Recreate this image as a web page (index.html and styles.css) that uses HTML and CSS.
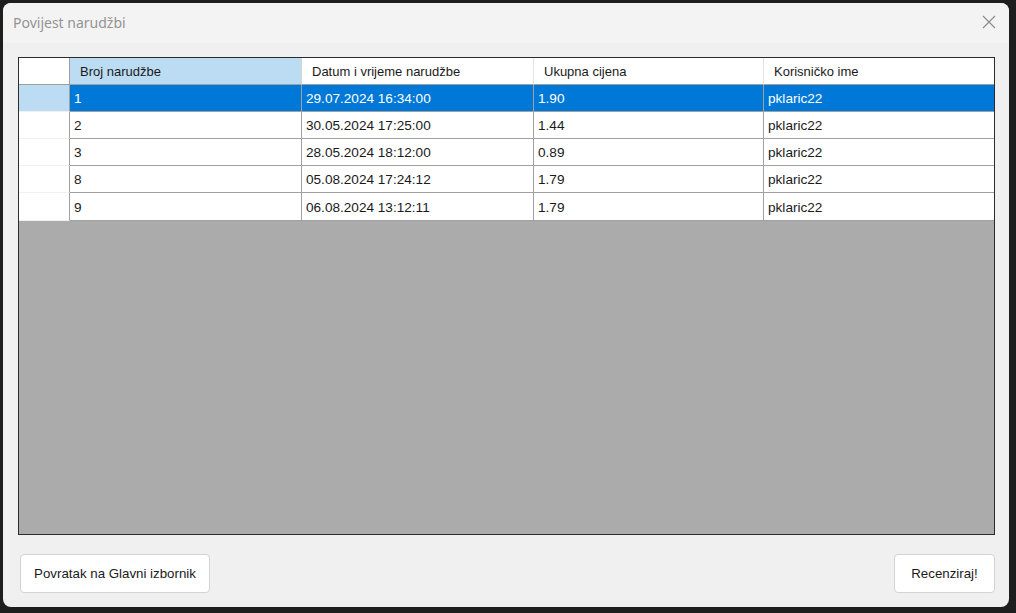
FILE: index.html
```html
<!DOCTYPE html>
<html>
<head>
<meta charset="utf-8">
<link rel="stylesheet" href="styles.css">
</head>
<body>
<div class="window">
  <div class="titlebar">
    <span class="title">Povijest narudžbi</span>
    <svg class="close" width="14" height="14" viewBox="0 0 14 14"><path d="M1 1L13 13M13 1L1 13" stroke="#8a8a8a" stroke-width="1.1" fill="none"/></svg>
  </div>
  <div class="client">
    <div class="grid">
      <div class="row head">
        <div class="rh"></div>
        <div class="hc sel">Broj narudžbe</div>
        <div class="hc">Datum i vrijeme narudžbe</div>
        <div class="hc">Ukupna cijena</div>
        <div class="hc last">Korisničko ime</div>
      </div>
      <div class="row selected">
        <div class="rh sel"></div>
        <div class="c">1</div>
        <div class="c">29.07.2024 16:34:00</div>
        <div class="c">1.90</div>
        <div class="c last">pklaric22</div>
      </div>
      <div class="row">
        <div class="rh"></div>
        <div class="c">2</div>
        <div class="c">30.05.2024 17:25:00</div>
        <div class="c">1.44</div>
        <div class="c last">pklaric22</div>
      </div>
      <div class="row">
        <div class="rh"></div>
        <div class="c">3</div>
        <div class="c">28.05.2024 18:12:00</div>
        <div class="c">0.89</div>
        <div class="c last">pklaric22</div>
      </div>
      <div class="row">
        <div class="rh"></div>
        <div class="c">8</div>
        <div class="c">05.08.2024 17:24:12</div>
        <div class="c">1.79</div>
        <div class="c last">pklaric22</div>
      </div>
      <div class="row">
        <div class="rh"></div>
        <div class="c">9</div>
        <div class="c">06.08.2024 13:12:11</div>
        <div class="c">1.79</div>
        <div class="c last">pklaric22</div>
      </div>
    </div>
    <div class="buttons">
      <button class="btn back">Povratak na Glavni izbornik</button>
      <button class="btn review">Recenziraj!</button>
    </div>
  </div>
</div>
</body>
</html>
```
FILE: styles.css
```css
html, body {
  margin: 0;
  padding: 0;
  background: #1e1e1e;
  width: 1016px;
  height: 613px;
  overflow: hidden;
}
body {
  padding: 3px 0 0 3px;
  box-sizing: border-box;
}
.window {
  width: 1006px;
  height: 604px;
  background: #f0f0f0;
  border-radius: 8px;
  display: flex;
  flex-direction: column;
  font-family: "Liberation Sans", Arial, sans-serif;
  overflow: hidden;
}
.titlebar {
  height: 40px;
  flex: none;
  display: flex;
  align-items: center;
  justify-content: space-between;
  padding: 0 13px 0 10px;
  background: #f3f3f3;
}
.title {
  font-family: "Noto Sans", "Open Sans", sans-serif;
  font-size: 14px;
  color: #939393;
  padding-bottom: 2px;
}
.close {
  margin-top: -2px;
}
.client {
  flex: 1;
  display: flex;
  flex-direction: column;
  padding: 14px 14px 14px 15px;
}
.grid {
  height: 476px;
  border: 1px solid #2b2b2b;
  background: #ababab;
  display: flex;
  flex-direction: column;
}
.row {
  display: flex;
  height: 27px;
  flex: none;
  font-size: 13.6px;
  color: #1a1a1a;
  background: #ffffff;
}
.row.head {
  font-size: 13px;
}
.row:last-child {
  height: 28px;
}
.rh {
  width: 50px;
  flex: none;
  border-right: 1px solid #a0a0a0;
  border-bottom: 1px solid #f0f0f0;
  background: #ffffff;
}
.rh.sel {
  background: #bcdcf4;
}
.head .rh {
  border-bottom: 1px solid #a0a0a0;
}
.hc, .c {
  flex: none;
  display: flex;
  align-items: center;
  white-space: nowrap;
  overflow: hidden;
  box-sizing: border-box;
  width: 232px;
}
.hc:nth-child(4), .c:nth-child(4) {
  width: 230px;
}
.hc {
  padding-left: 10px;
  border-right: 1px solid #e3e3e3;
  border-bottom: 1px solid #a0a0a0;
}
.hc.sel {
  background: #bcdcf4;
  border-right: 1px solid #d6d6d6;
}
.hc.last {
  flex: 1;
  border-right: none;
}
.c {
  padding-left: 4px;
  padding-top: 1px;
  border-right: 1px solid #a0a0a0;
  border-bottom: 1px solid #a0a0a0;
}
.c.last {
  flex: 1;
  border-right: none;
}
.selected .c {
  background: #0078d7;
  color: #ffffff;
}
.buttons {
  display: flex;
  justify-content: space-between;
  margin-top: 19px;
  padding-left: 2px;
}
.btn {
  height: 39px;
  background: #ffffff;
  border: 1px solid #d3d3d3;
  border-radius: 4px;
  font-family: "Liberation Sans", Arial, sans-serif;
  font-size: 13.3px;
  color: #1a1a1a;
  padding: 0;
}
.back {
  width: 190px;
}
.review {
  width: 101px;
}
```
